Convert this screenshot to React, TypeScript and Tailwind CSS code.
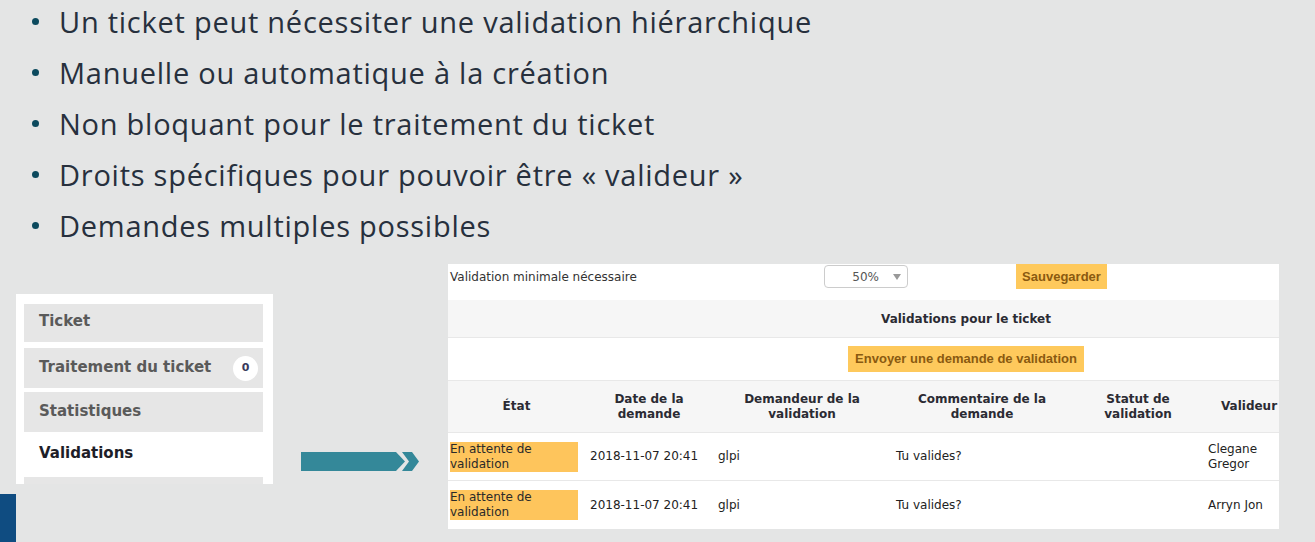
const bullets = [
  "Un ticket peut nécessiter une validation hiérarchique",
  "Manuelle ou automatique à la création",
  "Non bloquant pour le traitement du ticket",
  "Droits spécifiques pour pouvoir être « valideur »",
  "Demandes multiples possibles",
];

const cols = ["w-[137px]", "w-[128px]", "w-[178px]", "w-[182px]", "w-[130px]", "w-[92px]", "w-[189px]"];

const headers = [
  "État",
  "Date de la demande",
  "Demandeur de la validation",
  "Commentaire de la demande",
  "Statut de validation",
  "Valideur",
  "Commentaire de la validation",
];

const rows = [
  { valideur: "Clegane Gregor" },
  { valideur: "Arryn Jon" },
];

function Tab({ label, active, badge }: { label: string; active?: boolean; badge?: string }) {
  return (
    <div
      className={
        active
          ? "h-[45px] bg-white flex items-center justify-between pl-[15px] pr-[5px] text-[15px] font-bold text-[#1e1e28]"
          : "h-[40px] bg-[#e6e6e6] flex items-center justify-between pl-[15px] pr-[5px] text-[15px] font-bold text-[#5a5a5a]"
      }
    >
      <span className="-mt-[2px]">{label}</span>
      {badge && (
        <span className="w-[25px] h-[25px] rounded-full bg-white flex items-center justify-center text-[11px] text-[#3a3a5c]">
          {badge}
        </span>
      )}
    </div>
  );
}

function Arrow() {
  return (
    <svg width="120" height="19" viewBox="0 0 120 19" className="mt-[188px] shrink-0">
      <polygon points="0,0 95,0 104,9.5 95,19 0,19" fill="#348899" />
      <polygon points="101,0 111,0 118,9.5 111,19 101,19 108,9.5" fill="#348899" />
    </svg>
  );
}

export default function App() {
  return (
    <div
      className="w-[1315px] h-[542px] bg-[#e4e5e5] overflow-hidden"
      style={{ fontFamily: "'Open Sans', Lato, sans-serif" }}
    >
      <div className="h-[264px] flex flex-col">
        <div className="-mt-[4px]">
          {bullets.map((b) => (
            <div key={b} className="flex items-center h-[51px] text-[29px] tracking-[0.75px] text-[#27303d]">
              <span className="ml-[32px] w-[7px] h-[7px] rounded-full bg-[#0c4a5e] shrink-0" />
              <span className="ml-[20px]">{b}</span>
            </div>
          ))}
        </div>
      </div>

      <div className="flex items-start">
        <div className="w-[301px] shrink-0 flex flex-col" style={{ fontFamily: "'DejaVu Sans', Verdana, sans-serif" }}>
          <div className="ml-[16px] mt-[30px] w-[257px] h-[190px] bg-white overflow-hidden pl-[8px] pr-[10px] pt-[10px]">
            <div className="flex flex-col">
              <div className="h-[38px] bg-[#e6e6e6] flex items-center pl-[15px] text-[15px] font-bold text-[#5a5a5a]">
                <span className="-mt-[3px]">Ticket</span>
              </div>
              <div className="h-[6px]" />
              <Tab label="Traitement du ticket" badge="0" />
              <div className="h-[4px]" />
              <Tab label="Statistiques" />
              <Tab label="Validations" active />
              <div className="h-[40px] bg-[#e6e6e6]" />
            </div>
          </div>
          <div className="w-[16px] h-[48px] mt-[10px] bg-[#0f4c81]" />
        </div>

        <Arrow />

        <div
          className="ml-[27px] w-[831px] h-[265px] bg-white overflow-hidden text-[12px] text-[#222]"
          style={{ fontFamily: "'DejaVu Sans', Verdana, sans-serif" }}
        >
          <div className="w-[1036px]">
            <div className="h-[36px] flex items-start">
              <div className="w-[376px] h-[25px] pl-[2px] flex items-center text-[#333]">Validation minimale nécessaire</div>
              <div className="mt-[1px] w-[84px] h-[23px] border border-[#cccccc] rounded-[4px] flex items-center justify-end pr-[6px] text-[#555]">
                <span className="mr-[14px]">50%</span>
                <span className="w-0 h-0 border-l-[4px] border-r-[4px] border-t-[6px] border-l-transparent border-r-transparent border-t-[#999]" />
              </div>
              <div className="w-[108px]" />
              <div
                className="h-[25px] w-[91px] bg-[#fec95c] flex items-center justify-center font-bold text-[13px] text-[#8a5a10]"
                style={{ fontFamily: "'Liberation Sans', Arial, sans-serif" }}
              >
                Sauvegarder
              </div>
            </div>

            <div className="h-[37px] bg-[#f6f6f6] flex items-center justify-center font-bold text-[#2b2b33]">
              Validations pour le ticket
            </div>

            <div className="h-[44px] border-t border-b border-[#e8e8e8] flex justify-center pt-[8px]">
              <div
                className="h-[26px] px-[7px] bg-[#fec95c] flex items-center font-bold text-[13px] text-[#8a5a10]"
                style={{ fontFamily: "'Liberation Sans', Arial, sans-serif" }}
              >
                Envoyer une demande de validation
              </div>
            </div>

            <div className="h-[52px] bg-[#f6f6f6] border-b border-[#e8e8e8] flex items-center font-bold text-[#2b2b33] leading-[15px]">
              {headers.map((h, i) => (
                <div key={h} className={`${cols[i]} px-[5px] text-center`}>
                  {h}
                </div>
              ))}
            </div>

            {rows.map((r, idx) => (
              <div
                key={idx}
                className={
                  idx === 0
                    ? "h-[48px] border-b border-[#e8e8e8] flex items-center leading-[15px]"
                    : "h-[48px] flex items-center leading-[15px]"
                }
              >
                <div className={`${cols[0]} pl-[2px] pr-[7px]`}>
                  <div className="w-[128px] bg-[#fec55c] text-[#2a2a2a]">En attente de validation</div>
                </div>
                <div className={`${cols[1]} px-[5px]`}>2018-11-07 20:41</div>
                <div className={`${cols[2]} px-[5px]`}>glpi</div>
                <div className={`${cols[3]} px-[5px]`}>Tu valides?</div>
                <div className={`${cols[4]} px-[5px]`}></div>
                <div className={`${cols[5]} px-[5px]`}>{r.valideur}</div>
                <div className={`${cols[6]} px-[5px]`}></div>
              </div>
            ))}
          </div>
        </div>
      </div>
    </div>
  );
}
